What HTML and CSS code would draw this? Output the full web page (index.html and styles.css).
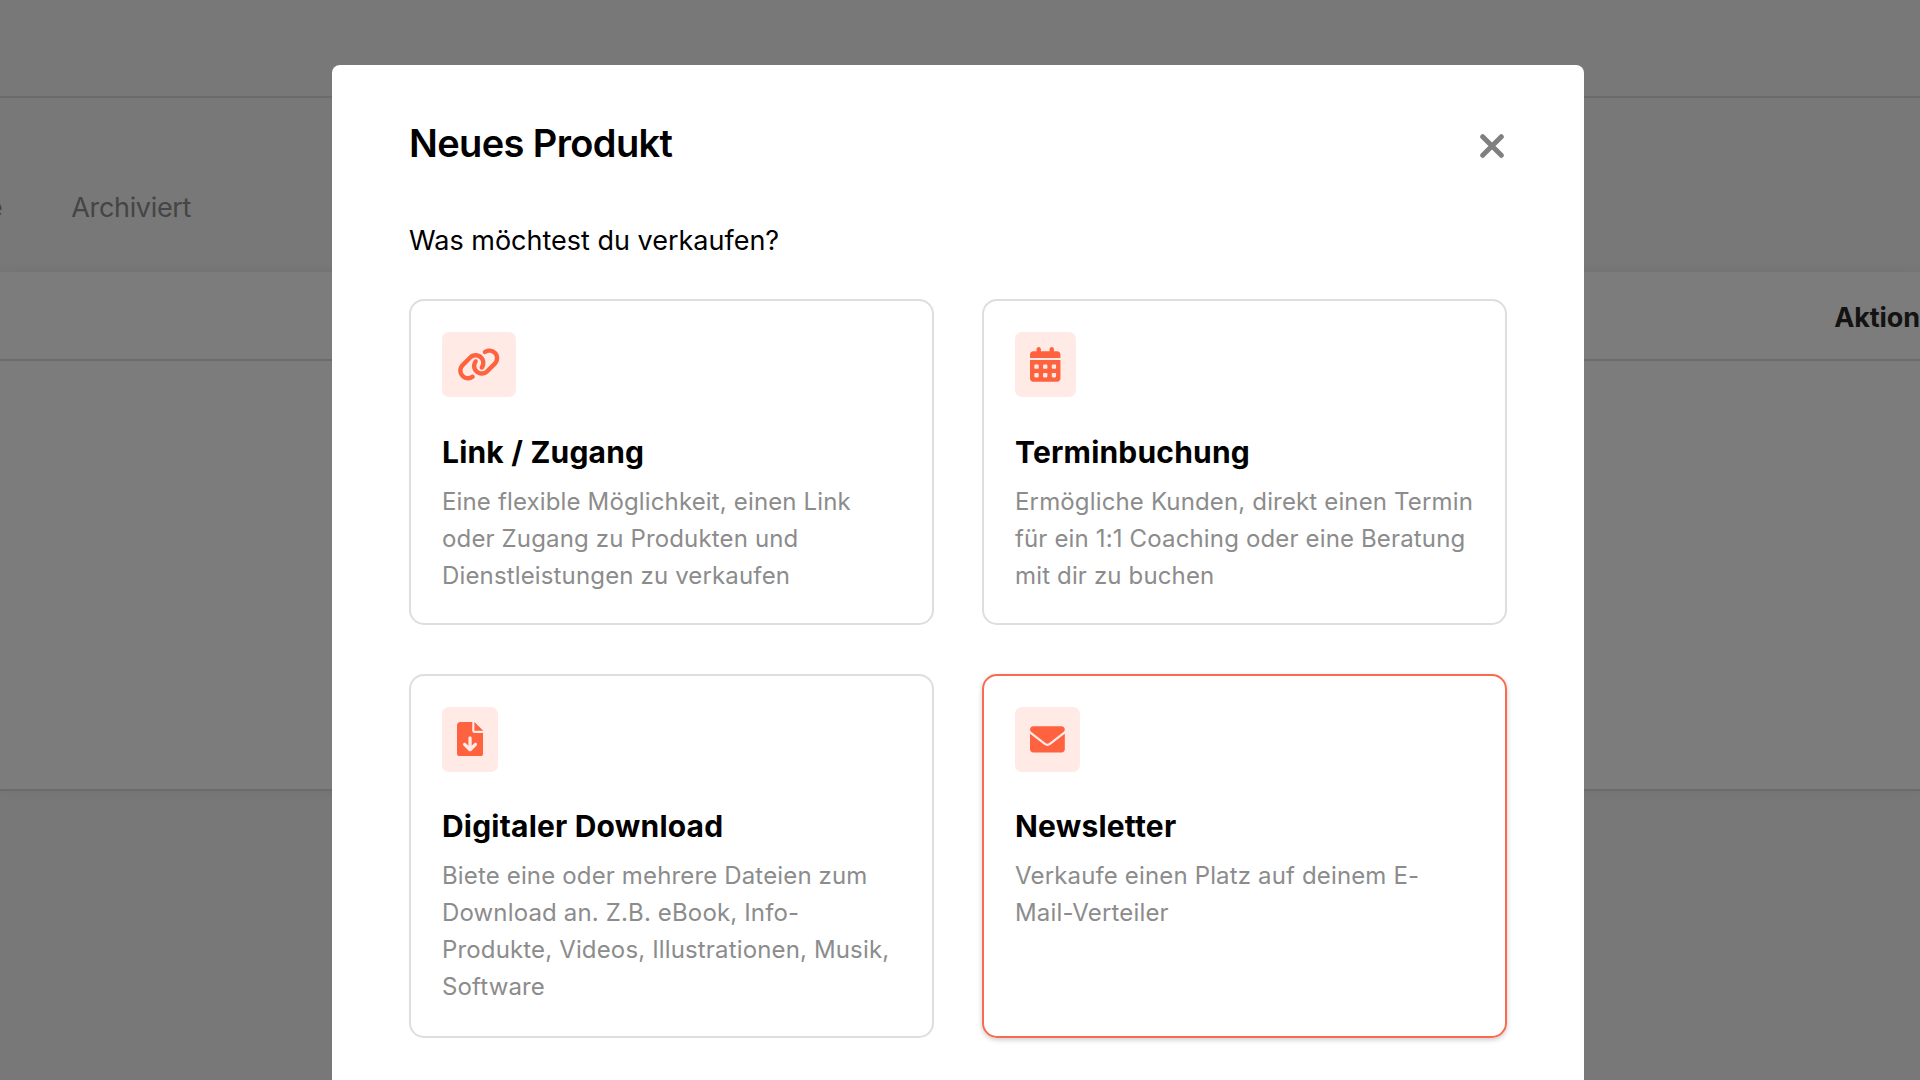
FILE: index.html
```html
<!DOCTYPE html>
<html lang="de">
<head>
<meta charset="utf-8">
<title>Neues Produkt</title>
<link rel="stylesheet" href="styles.css">
</head>
<body>
<div class="page">
  <header class="topbar"></header>
  <nav class="tabs">
    <a class="tab">Aktive</a>
    <a class="tab">Archiviert</a>
  </nav>
  <section class="table">
    <div class="table-head"><span class="table-col">Aktion</span></div>
    <div class="table-body"></div>
  </section>
</div>
<div class="overlay">
  <main class="modal">
    <div class="modal-head">
      <h1 class="modal-title">Neues Produkt</h1>
      <svg class="close" viewBox="0 0 24 24"><path d="M2.7 2.7 21.3 21.3M21.3 2.7 2.7 21.3"/></svg>
    </div>
    <p class="question">Was möchtest du verkaufen?</p>
    <div class="grid">
      <article class="card">
        <span class="tile"><svg class="icon" viewBox="0 0 640 512"><path d="M579.8 267.7c56.5-56.5 56.5-148 0-204.5c-50-50-128.8-56.5-186.3-15.4l-1.6 1.1c-14.4 10.3-17.7 30.3-7.4 44.6s30.3 17.7 44.6 7.4l1.6-1.1c32.1-22.9 76-19.3 103.8 8.6c31.5 31.5 31.5 82.5 0 114L422.3 334.8c-31.5 31.5-82.5 31.5-114 0c-27.9-27.9-31.5-71.8-8.6-103.8l1.1-1.6c10.3-14.4 6.9-34.4-7.4-44.6s-34.4-6.9-44.6 7.4l-1.1 1.6C206.5 251.2 213 330 263 380c56.5 56.5 148 56.5 204.5 0L579.8 267.7zM60.2 244.3c-56.5 56.5-56.5 148 0 204.5c50 50 128.8 56.5 186.3 15.4l1.6-1.1c14.4-10.3 17.7-30.3 7.4-44.6s-30.3-17.7-44.6-7.4l-1.6 1.1c-32.1 22.9-76 19.3-103.8-8.6C74 372 74 321 105.5 289.5L217.7 177.2c31.5-31.5 82.5-31.5 114 0c27.9 27.9 31.5 71.8 8.6 103.9l-1.1 1.6c-10.3 14.4-6.9 34.4 7.4 44.6s34.4 6.9 44.6-7.4l1.1-1.6C433.5 260.8 427 182 377 132c-56.5-56.5-148-56.5-204.5 0L60.2 244.3z"/></svg></span>
        <h2 class="card-title">Link / Zugang</h2>
        <p class="card-text">Eine flexible Möglichkeit, einen Link<br>oder Zugang zu Produkten und<br>Dienstleistungen zu verkaufen</p>
      </article>
      <article class="card">
        <span class="tile"><svg class="icon" viewBox="0 0 448 512"><path fill-rule="evenodd" d="M160 32V64H288V32C288 14.3 302.3 0 320 0S352 14.3 352 32V64H400C426.5 64 448 85.5 448 112V160H0V112C0 85.5 21.5 64 48 64H96V32C96 14.3 110.3 0 128 0S160 14.3 160 32zM0 192H448V464C448 490.5 426.5 512 400 512H48C21.5 512 0 490.5 0 464V192zM64 304c0 8.8 7.2 16 16 16h32c8.8 0 16-7.2 16-16v-32c0-8.8-7.2-16-16-16h-32c-8.8 0-16 7.2-16 16zM192 304c0 8.8 7.2 16 16 16h32c8.8 0 16-7.2 16-16v-32c0-8.8-7.2-16-16-16h-32c-8.8 0-16 7.2-16 16zM320 304c0 8.8 7.2 16 16 16h32c8.8 0 16-7.2 16-16v-32c0-8.8-7.2-16-16-16h-32c-8.8 0-16 7.2-16 16zM64 432c0 8.8 7.2 16 16 16h32c8.8 0 16-7.2 16-16v-32c0-8.8-7.2-16-16-16h-32c-8.8 0-16 7.2-16 16zM192 432c0 8.8 7.2 16 16 16h32c8.8 0 16-7.2 16-16v-32c0-8.8-7.2-16-16-16h-32c-8.8 0-16 7.2-16 16zM320 432c0 8.8 7.2 16 16 16h32c8.8 0 16-7.2 16-16v-32c0-8.8-7.2-16-16-16h-32c-8.8 0-16 7.2-16 16z"/></svg></span>
        <h2 class="card-title">Terminbuchung</h2>
        <p class="card-text">Ermögliche Kunden, direkt einen Termin<br>für ein 1:1 Coaching oder eine Beratung<br>mit dir zu buchen</p>
      </article>
      <article class="card">
        <span class="tile"><svg class="icon" viewBox="0 0 384 512"><path fill-rule="evenodd" d="M256 0v128h128L256 0zM224 128V0H48C21.5 0 0 21.5 0 48v416c0 26.5 21.5 48 48 48h288c26.5 0 48-21.5 48-48V160H256C238.3 160 224 145.7 224 128zM289 345l-80 80C204.3 429.7 198.1 432 192 432s-12.3-2.3-17-7l-80-80c-9.4-9.4-9.4-24.6 0-33.9s24.6-9.4 33.9 0L168 350.1V232C168 218.8 178.8 208 192 208s24 10.8 24 24v118.1l39-39c9.4-9.4 24.6-9.4 33.9 0S298.3 335.6 289 345z"/></svg></span>
        <h2 class="card-title">Digitaler Download</h2>
        <p class="card-text">Biete eine oder mehrere Dateien zum<br>Download an. Z.B. eBook, Info-<br>Produkte, Videos, Illustrationen, Musik,<br>Software</p>
      </article>
      <article class="card card-selected">
        <span class="tile"><svg class="icon" viewBox="0 0 512 512"><path d="M256 352c-16.53 0-33.06-5.422-47.16-16.41L0 173.2V400C0 426.5 21.49 448 48 448h416c26.51 0 48-21.49 48-48V173.2l-208.8 162.5C289.1 346.6 272.5 352 256 352zM16.29 145.3l212.2 165.1c16.19 12.6 38.87 12.6 55.06 0l212.2-165.1C505.1 137.3 512 125 512 112C512 85.49 490.5 64 464 64h-416C21.49 64 0 85.49 0 112C0 125 6.01 137.3 16.29 145.3z"/></svg></span>
        <h2 class="card-title">Newsletter</h2>
        <p class="card-text">Verkaufe einen Platz auf deinem E-<br>Mail-Verteiler</p>
      </article>
    </div>
  </main>
</div>
</body>
</html>
```
FILE: styles.css
```css
* { box-sizing: border-box; margin: 0; padding: 0; }

body {
  height: 1080px;
  overflow: hidden;
  font-family: Inter, "Liberation Sans", sans-serif;
  color: #000;
}

.page {
  display: flex;
  flex-direction: column;
  height: 1080px;
  background: #f0f0f0;
}

.topbar { height: 98px; border-bottom: 2px solid #d6d6d6; }

.tabs {
  display: flex;
  justify-content: flex-end;
  gap: 69px;
  width: 191px;
  height: 174px;
  padding-top: 93px;
  font-size: 27px;
  line-height: 34px;
  letter-spacing: -.35px;
  color: #8a8a8a;
}

.table {
  height: 519px;
  background: #f8f8f8;
  border-bottom: 2px solid #d6d6d6;
  box-shadow: 0 0 12px rgba(0, 0, 0, .06);
}

.table-head {
  display: flex;
  justify-content: flex-end;
  align-items: center;
  height: 89px;
  padding-top: 3px;
  border-bottom: 2px solid #d6d6d6;
  font-size: 27px;
  font-weight: 700;
  letter-spacing: -.1px;
  color: #262626;
}

.overlay {
  position: absolute;
  inset: 0;
  padding-top: 65px;
  overflow: hidden;
  background: rgba(0, 0, 0, .5);
}

.modal {
  width: 1252px;
  height: 1100px;
  margin-left: 332px;
  padding: 54px 77px 0;
  background: #fff;
  border-radius: 8px;
}

.modal-head {
  display: flex;
  justify-content: space-between;
  align-items: center;
  height: 48px;
}

.modal-title {
  font-size: 38px;
  font-weight: 600;
  line-height: 48px;
  letter-spacing: -.62px;
}

.close {
  width: 24px;
  height: 24px;
  margin: 6px 3px 0 0;
  fill: none;
  stroke: #808080;
  stroke-width: 5;
  stroke-linecap: round;
}

.question { margin-top: 54px; font-size: 27px; line-height: 40px; }

.grid {
  display: grid;
  grid-template-columns: 1fr 1fr;
  grid-template-rows: 326px 364px;
  gap: 48.5px 48px;
  margin-top: 38px;
}

.card {
  padding: 31px;
  border: 2px solid #dedede;
  border-radius: 15px;
}

.card-selected {
  border-color: #f96a50;
  box-shadow: 0 2px 5px rgba(0, 0, 0, .2);
}

.tile {
  display: flex;
  width: max-content;
  padding: 15.2px;
  border-radius: 7px;
  background: #ffeae5;
}

.icon { height: 34.8px; fill: #ff623e; }

.card-title {
  margin-top: 34.8px;
  font-size: 30px;
  font-weight: 700;
  line-height: 40px;
  letter-spacing: .2px;
}

.card-text {
  margin-top: 11px;
  font-size: 24px;
  line-height: 37px;
  letter-spacing: .15px;
  color: #8c8c8c;
  white-space: nowrap;
}
```
